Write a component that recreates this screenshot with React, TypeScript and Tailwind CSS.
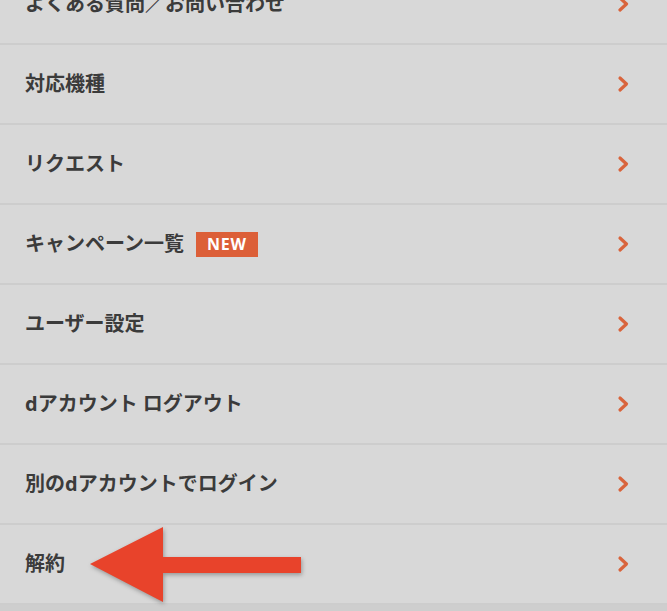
import React from 'react';

type MenuItem = {
  label: React.ReactNode;
  badge?: string;
  pointer?: boolean;
};

const items: MenuItem[] = [
  { label: 'よくある質問／お問い合わせ' },
  { label: '対応機種' },
  { label: 'リクエスト' },
  { label: 'キャンペーン一覧', badge: 'NEW' },
  { label: 'ユーザー設定' },
  { label: 'dアカウント ログアウト' },
  { label: '別のdアカウントでログイン' },
  { label: '解約', pointer: true },
];

const Chevron: React.FC = () => (
  <svg width="12" height="18" viewBox="0 0 12 18" fill="none" className="shrink-0">
    <path d="M3 3 L9.5 9 L3 15" stroke="#d9643c" strokeWidth={3.2} strokeLinecap="round" strokeLinejoin="round" />
  </svg>
);

// red callout arrow pointing at a row
const PointerArrow: React.FC = () => (
  <svg
    width="230"
    height="90"
    viewBox="0 0 230 90"
    className="absolute left-[82px] top-[-2px] pointer-events-none"
    style={{ filter: 'drop-shadow(1px 2px 2px rgba(0,0,0,0.3))' }}
  >
    <path d="M8 41 L81 4 L81 34 L219 34 L219 50 L81 50 L81 79 Z" fill="#e8432b" />
  </svg>
);

const App: React.FC = () => {
  return (
    <div
      className="w-[667px] h-[611px] overflow-hidden bg-[#d8d8d8]"
      style={{ fontFamily: '"Open Sans", "Noto Sans CJK JP", sans-serif' }}
    >
      <ul className="-mt-[35px]">
        {items.map((item, i) => (
          <li
            key={i}
            className="relative h-[80px] flex items-center justify-between pl-[25px] pr-[38px] border-b-2 border-[#cdcdcd]"
          >
            <div className="flex items-center gap-[12px]">
              <span className="text-[20px] font-bold text-[#3b3b3b]">{item.label}</span>
              {item.badge && (
                <span className="h-[25px] px-[11px] flex items-center bg-[#dc5f38] text-white text-[16px] font-bold tracking-[0.05em]">
                  {item.badge}
                </span>
              )}
            </div>
            <Chevron />
            {item.pointer && <PointerArrow />}
          </li>
        ))}
      </ul>
      <div className="h-[40px] bg-[#cecece]" />
    </div>
  );
};

export default App;
